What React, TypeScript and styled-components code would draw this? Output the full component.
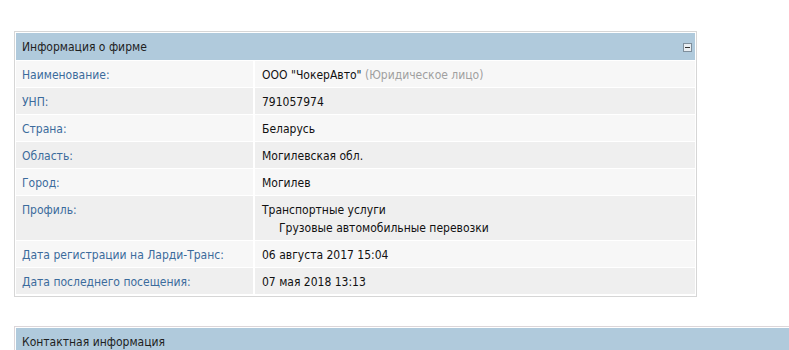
import React from 'react';
import styled, { createGlobalStyle } from 'styled-components';

const ROWS = [
  { label: 'Наименование:', value: 'name' },
  { label: 'УНП:', value: '791057974' },
  { label: 'Страна:', value: 'Беларусь' },
  { label: 'Область:', value: 'Могилевская обл.' },
  { label: 'Город:', value: 'Могилев' },
  { label: 'Профиль:', value: 'profile' },
  { label: 'Дата регистрации на Ларди-Транс:', value: '06 августа 2017 15:04' },
  { label: 'Дата последнего посещения:', value: '07 мая 2018 13:13' },
];

export default function App() {
  const renderValue = (v: string) => {
    if (v === 'name') {
      return (
        <>
          ООО "ЧокерАвто" <Muted>(Юридическое лицо)</Muted>
        </>
      );
    }
    if (v === 'profile') {
      return (
        <>
          <div>Транспортные услуги</div>
          <SubLine>Грузовые автомобильные перевозки</SubLine>
        </>
      );
    }
    return v;
  };

  return (
    <>
      <GlobalStyle />
      <Page>
        <Panel>
          <PanelHeader>
            <span>Информация о фирме</span>
            <Collapse aria-label="свернуть" />
          </PanelHeader>
          <InfoGrid>
            {ROWS.map((row, i) => (
              <React.Fragment key={row.label}>
                <LabelCell $odd={i % 2 === 1}>{row.label}</LabelCell>
                <ValueCell $odd={i % 2 === 1}>{renderValue(row.value)}</ValueCell>
              </React.Fragment>
            ))}
          </InfoGrid>
        </Panel>

        <WidePanel>
          <PanelHeader>
            <span>Контактная информация</span>
          </PanelHeader>
        </WidePanel>
      </Page>
    </>
  );
}

/* ----------------- STYLES ----------------- */

const GlobalStyle = createGlobalStyle`
  html, body {
    margin: 0;
    padding: 0;
    background: #fff;
    overflow: hidden;
  }
  body {
    font-family: 'DejaVu Sans Condensed', 'DejaVu Sans', Verdana, sans-serif;
    font-stretch: condensed;
    font-size: 12px;
    color: #222;
  }
`;

const Page = styled.div`
  padding: 31px 0 0 14px;
  display: flex;
  flex-direction: column;
  gap: 29px;
`;

const Panel = styled.div`
  width: 679px;
  border: 1px solid #d6d6d6;
  padding: 1px 1px 2px;
`;

const WidePanel = styled(Panel)`
  width: 820px;
  border-color: #dcd6d9;
`;

const PanelHeader = styled.div`
  height: 26px;
  background: #b0cadc;
  display: flex;
  align-items: center;
  justify-content: space-between;
  padding: 1px 3px 0 6px;
  color: #1e1e1e;
`;

const Collapse = styled.button`
  position: relative;
  width: 9px;
  height: 9px;
  padding: 0;
  border: 1px solid #7f8f9c;
  background: #e9eef2;
  cursor: pointer;

  &::after {
    content: '';
    position: absolute;
    left: 1px;
    right: 1px;
    top: 3px;
    height: 1px;
    background: #333;
  }
`;

const InfoGrid = styled.div`
  display: grid;
  grid-template-columns: 237px 1fr;
  column-gap: 2px;
  row-gap: 1px;
  margin-top: 1px;
`;

const Cell = styled.div<{ $odd: boolean }>`
  background: ${(p) => (p.$odd ? '#efefef' : '#f7f7f7')};
  padding: 5px 6px 3px;
  line-height: 18px;
`;

const LabelCell = styled(Cell)`
  color: #3b6b9c;
`;

const ValueCell = styled(Cell)`
  color: #111;
  padding-left: 7px;
`;

const Muted = styled.span`
  color: #a0a0a0;
`;

const SubLine = styled.div`
  padding-left: 17px;
`;
